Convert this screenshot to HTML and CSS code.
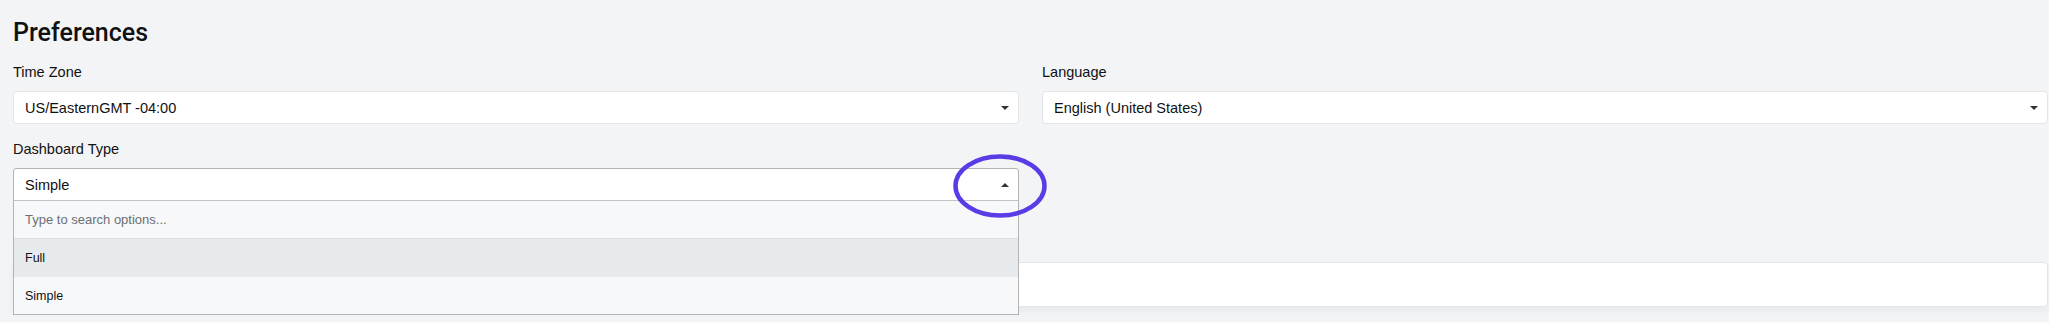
FILE: index.html
```html
<!DOCTYPE html>
<html lang="en">
<head>
    <meta charset="UTF-8">
    <meta name="viewport" content="width=device-width, initial-scale=1.0">
    <title>Preferences</title>
    <link rel="stylesheet" href="styles.css">
</head>
<body>
    <div class="page">
        <h1>Preferences</h1>

        <div class="row">
            <div class="field">
                <label>Time Zone</label>
                <div class="select">
                    <span>US/EasternGMT -04:00</span>
                    <span class="caret"></span>
                </div>
            </div>
            <div class="field">
                <label>Language</label>
                <div class="select">
                    <span>English (United States)</span>
                    <span class="caret"></span>
                </div>
            </div>
        </div>

        <div class="row second">
            <div class="field">
                <label>Dashboard Type</label>
                <div class="select open">
                    <span>Simple</span>
                    <span class="caret up"></span>

                    <div class="menu">
                        <div class="menu-search">Type to search options...</div>
                        <div class="menu-item active">Full</div>
                        <div class="menu-item">Simple</div>
                    </div>

                    <svg class="ring" width="94" height="64" viewBox="0 0 94 64">
                        <ellipse cx="47" cy="32" rx="44.5" ry="29.5" fill="none" stroke="#5a3ce6" stroke-width="4.5"/>
                    </svg>
                </div>
            </div>
            <div></div>
        </div>

        <div class="panel"></div>
    </div>
</body>
</html>
```

FILE: styles.css
```css
body {
    margin: 0;
    background-color: #f3f4f6;
    font-family: "Liberation Sans", Arial, sans-serif;
    color: #111;
}

.page {
    padding: 17px 1px 20px 13px;
}

h1 {
    margin: 0;
    font-family: Roboto, "Liberation Sans", sans-serif;
    font-weight: 500;
    font-size: 25px;
    line-height: 32px;
}

.row {
    display: grid;
    grid-template-columns: 1fr 1fr;
    column-gap: 23px;
    margin-top: 13px;
}

.row.second {
    margin-top: 15px;
}

.field label {
    display: block;
    font-size: 14.5px;
    line-height: 20px;
    margin-bottom: 9px;
}

.select {
    position: relative;
    height: 33px;
    box-sizing: border-box;
    display: flex;
    align-items: center;
    justify-content: space-between;
    padding: 0 9px 0 11px;
    background-color: #fff;
    border: 1px solid #e3e5e8;
    border-radius: 4px;
    font-size: 14.5px;
}

.select.open {
    border-color: #b4b4b4;
    border-radius: 3px 3px 0 0;
}

.caret {
    width: 0;
    height: 0;
    border-left: 4px solid transparent;
    border-right: 4px solid transparent;
    border-top: 4px solid #333;
}

.caret.up {
    border-top: none;
    border-bottom: 4px solid #333;
}

.menu {
    position: absolute;
    top: 100%;
    left: -1px;
    right: -1px;
    z-index: 2;
    background-color: #f7f8fa;
    border: 1px solid #b4b4b4;
    border-top: 1px solid #c4c4c4;
    font-size: 12.5px;
}

.menu-search {
    height: 37px;
    display: flex;
    align-items: center;
    padding-left: 11px;
    font-size: 13px;
    color: #6b6f75;
    border-bottom: 1px solid #dcdee1;
}

.menu-item {
    height: 37px;
    display: flex;
    align-items: center;
    padding-left: 11px;
}

.menu-item.active {
    height: 38px;
    background-color: #e7eaed;
}

.ring {
    position: absolute;
    top: -15px;
    right: -29px;
    z-index: 3;
}

.panel {
    margin-top: 61px;
    height: 43px;
    background-color: #fff;
    border: 1px solid #e3e5e8;
    border-radius: 4px;
    box-shadow: 0 4px 8px rgba(0, 0, 0, 0.05);
}
```
